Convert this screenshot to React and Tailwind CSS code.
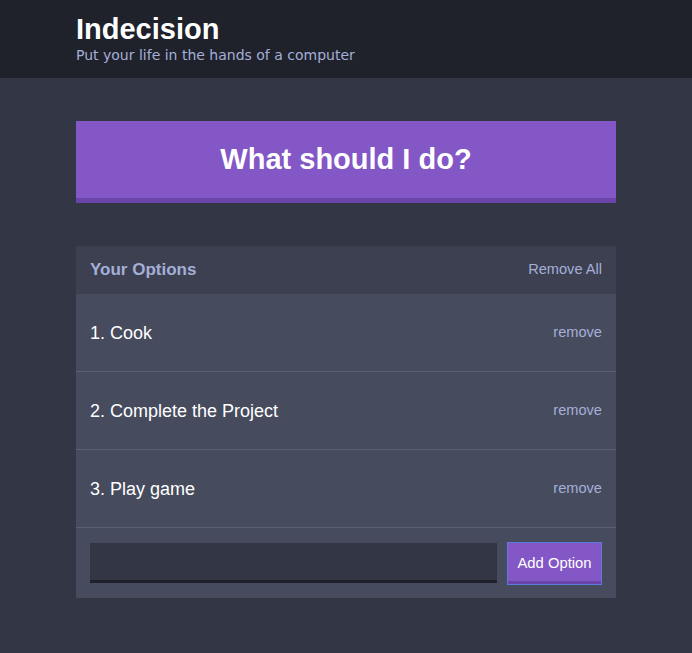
import React from 'react';

const options = ['Cook', 'Complete the Project', 'Play game'];

const Header = () => (
  <header className="bg-[#20222b] pt-[13px] pb-[14px]">
    <div className="mx-auto w-[540px]">
      <h1 className="text-[29px] leading-[33px] font-bold text-white">Indecision</h1>
      <h2 className="text-[14px] leading-[18px] text-[#a5afd7] font-['DejaVu_Sans',sans-serif]">
        Put your life in the hands of a computer
      </h2>
    </div>
  </header>
);

const Option = ({ index, text }) => (
  <div className="flex h-[78px] items-center justify-between border-b border-[#596075] px-[14px] pt-px">
    <p className="text-[18px] text-white">{index}. {text}</p>
    <button className="text-[14.6px] text-[#a5afd7]">remove</button>
  </div>
);

export default function App() {
  return (
    <div className="min-h-[653px] bg-[#333645] font-['Liberation_Sans',Arial,sans-serif]">
      <Header />
      <main className="mx-auto w-[540px] pt-[43px]">
        <button className="block h-[82px] w-full border-b-[5px] border-[#6a44a8] bg-[#8357c5] text-[29px] font-bold text-white">
          What should I do?
        </button>
        <div className="mt-[43px] bg-[#464b5e]">
          <div className="flex h-[48px] items-center justify-between bg-[#3c4051] px-[14px]">
            <h3 className="text-[17px] font-bold text-[#a5afd7]">Your Options</h3>
            <button className="text-[14.6px] text-[#a5afd7]">Remove All</button>
          </div>
          {options.map((o, i) => (
            <Option key={o} index={i + 1} text={o} />
          ))}
          <form className="flex items-start gap-[10px] px-[14px] pt-[14px] pb-[13px]" onSubmit={(e) => e.preventDefault()}>
            <input className="mt-px h-[40px] flex-1 border-b-[3px] border-[#20222b] bg-[#333645] px-2 text-white outline-none" />
            <button className="h-[43px] w-[95px] border border-[#5b7adb] bg-[#8357c5] text-[14.8px] text-white shadow-[inset_0_-3px_0_#6a44a8]">
              Add Option
            </button>
          </form>
        </div>
      </main>
    </div>
  );
}
